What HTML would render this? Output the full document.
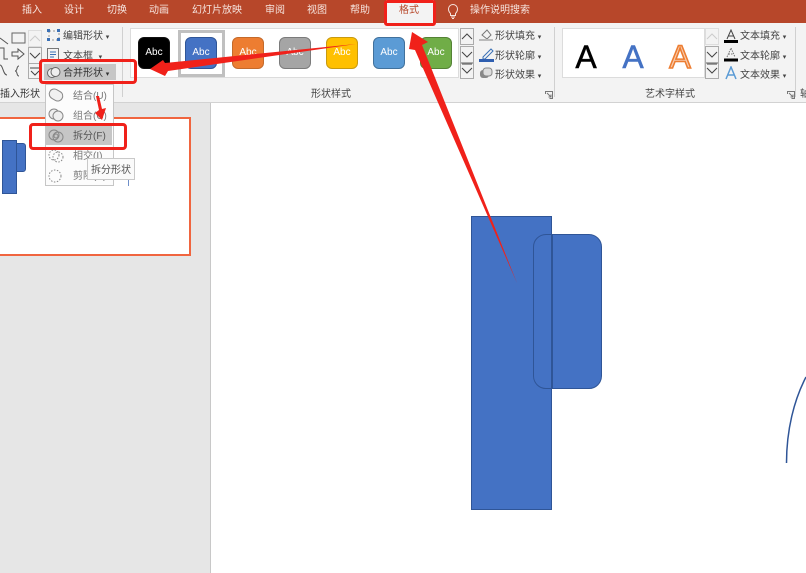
<!DOCTYPE html>
<html><head><meta charset="utf-8">
<style>
html,body{margin:0;padding:0}
body{width:806px;height:573px;overflow:hidden;position:relative;background:#fff;font-family:"Liberation Sans","Noto Sans CJK SC",sans-serif;color:#444}
.a{position:absolute}
.t{position:absolute;font-size:10px;line-height:12px;white-space:nowrap;transform:translateY(2px)}
.tab{position:absolute;top:4px;font-size:10px;line-height:13px;color:#f6e4de;white-space:nowrap}
.sw{position:absolute;top:37px;width:32px;height:32px;border-radius:6px;box-sizing:border-box;border:1px solid;color:#fff;font-size:10px;line-height:29px;text-align:center}
.sb{position:absolute;width:14px;height:17px;background:#f3f3f3;border:1px solid #ababab;box-sizing:border-box}
</style></head><body>
<div class="a" style="left:0;top:0;width:806px;height:23px;background:#b7472a"></div>
<div class="a" style="left:0;top:23px;width:806px;height:79px;background:#f3f3f3;border-bottom:1px solid #d2d2d2"></div>
<div class="a" style="left:0;top:103px;width:210px;height:470px;background:#e6e6e6;border-right:1px solid #c8c8c8"></div>

<div class="tab" style="left:22px">插入</div>
<div class="tab" style="left:64px">设计</div>
<div class="tab" style="left:107px">切换</div>
<div class="tab" style="left:149px">动画</div>
<div class="tab" style="left:192px">幻灯片放映</div>
<div class="tab" style="left:265px">审阅</div>
<div class="tab" style="left:307px">视图</div>
<div class="tab" style="left:350px">帮助</div>
<div class="a" style="left:386px;top:0;width:48px;height:24px;background:#f3f3f3"></div>
<div class="tab" style="left:399px;color:#b7472a">格式</div>
<svg class="a" style="left:446px;top:2px" width="14" height="18" viewBox="0 0 14 18"><path d="M4.500 11.500C3 10 2.500 8.500 2.500 7A4.500 4.500 0 0 1 11.500 7C11.500 8.500 11 10 9.500 11.500V13.500H4.500ZM5 15H9M6 16.500H8" fill="none" stroke="#f6e4de"/></svg>
<div class="tab" style="left:470px">操作说明搜索</div>

<!-- shape gallery left -->
<svg class="a" style="left:0;top:28px" width="42" height="52" viewBox="0 0 42 52" fill="none" stroke="#555">
<path d="M0 10L8 16"/><rect x="12" y="5" width="13" height="10" stroke="#666"/>
<path d="M0 20H4V31H8"/><path d="M12 24H18V21L24 26L18 31V28H12Z"/>
<path d="M0 37C3 37 3 47 7 47"/><path d="M19 38C16 38 18 43 15 43C18 43 16 48 19 48"/>
</svg>
<div class="sb" style="left:28px;top:30px;border-color:#ddd"></div>
<div class="sb" style="left:28px;top:47px"></div>
<div class="sb" style="left:28px;top:63px;height:16px"></div>
<svg class="a" style="left:28px;top:30px" width="14" height="50" fill="none"><path d="M2 11L7 6L12 11" stroke="#ccc"/><path d="M2 23L7 28L12 23" stroke="#444"/><path d="M2 38H12M3 41L7 45L11 41" stroke="#444"/></svg>

<svg class="a" style="left:47px;top:29px" width="14" height="13" fill="none"><rect x="2" y="2" width="10" height="9" stroke="#999" stroke-dasharray="2 2"/><rect x="0" y="0" width="3" height="3" fill="#3a70b5"/><rect x="10" y="0" width="3" height="3" fill="#3a70b5"/><rect x="0" y="9" width="3" height="3" fill="#3a70b5"/><rect x="10" y="9" width="3" height="3" fill="#3a70b5"/></svg>
<div class="t" style="left:63px;top:29px">编辑形状 <span style="font-size:7px">▾</span></div>
<svg class="a" style="left:47px;top:48px" width="13" height="13" fill="none"><rect x=".5" y=".5" width="11" height="11" stroke="#777"/><path d="M3 4H9M3 6.500H9M3 9H7" stroke="#3a70b5"/></svg>
<div class="t" style="left:63px;top:49px">文本框 &nbsp;<span style="font-size:7px">▾</span></div>
<div class="a" style="left:44px;top:64px;width:72px;height:16px;background:#c6c6c6"></div>
<svg class="a" style="left:47px;top:66px" width="14" height="13" fill="none" stroke="#666"><circle cx="5" cy="7" r="4.500" fill="#eee"/><circle cx="8.500" cy="6" r="4.500" fill="#eee"/></svg>
<div class="t" style="left:63px;top:66px;color:#333">合并形状 <span style="font-size:7px">▾</span></div>
<div class="t" style="left:0;top:87px;color:#333">插入形状</div>
<div class="a" style="left:122px;top:27px;width:1px;height:70px;background:#d0d0d0"></div>

<!-- shape styles gallery -->
<div class="a" style="left:130px;top:28px;width:329px;height:50px;background:#fff;border:1px solid #dcdcdc;box-sizing:border-box"></div>
<div class="a" style="left:178px;top:30px;width:47px;height:47px;background:#fff;border:3px solid #c0c0c0;box-sizing:border-box"></div>
<div class="sw" style="left:138px;background:#000;border-color:#111">Abc</div>
<div class="sw" style="left:185px;background:#4472c4;border-color:#2f5597">Abc</div>
<div class="sw" style="left:232px;background:#ed7d31;border-color:#c46a2b">Abc</div>
<div class="sw" style="left:279px;background:#a5a5a5;border-color:#7b7b7b">Abc</div>
<div class="sw" style="left:326px;background:#ffc000;border-color:#c89a10">Abc</div>
<div class="sw" style="left:373px;background:#5b9bd5;border-color:#41719c">Abc</div>
<div class="sw" style="left:420px;background:#70ad47;border-color:#548235">Abc</div>
<div class="sb" style="left:460px;top:28px"></div>
<div class="sb" style="left:460px;top:46px"></div>
<div class="sb" style="left:460px;top:63px;height:16px"></div>
<svg class="a" style="left:460px;top:28px" width="14" height="50" fill="none" stroke="#444"><path d="M2 11L7 6L12 11M2 24L7 29L12 24M2 36H12M2 40L7 45L12 40"/></svg>
<svg class="a" style="left:479px;top:28px" width="16" height="14" fill="none"><path d="M3 7L8 2L12 7L8 11Z" stroke="#777"/><path d="M0 12H14" stroke="#bbb" stroke-width="2"/></svg>
<div class="t" style="left:495px;top:29px">形状填充 <span style="font-size:7px">▾</span></div>
<svg class="a" style="left:479px;top:47px" width="16" height="15"><path d="M4 10L12 2L14 4L6 12H4Z" fill="none" stroke="#3a70b5"/><path d="M0 13.500H15" stroke="#2f5fb0" stroke-width="3"/></svg>
<div class="t" style="left:495px;top:49px">形状轮廓 <span style="font-size:7px">▾</span></div>
<svg class="a" style="left:479px;top:67px" width="14" height="13"><rect x="1" y="3" width="9" height="8" rx="3" fill="#888"/><rect x="4" y="1" width="9" height="8" rx="3" fill="#ddd" stroke="#888"/></svg>
<div class="t" style="left:495px;top:68px">形状效果 <span style="font-size:7px">▾</span></div>
<div class="t" style="left:311px;top:87px;color:#444">形状样式</div>
<svg class="a" style="left:545px;top:91px" width="8" height="8" fill="none" stroke="#777"><path d="M.5 3V.5H7.500V7.500H4.500M2 2L6 6M6 3.500V6H3.500"/></svg>
<div class="a" style="left:554px;top:27px;width:1px;height:70px;background:#d0d0d0"></div>

<!-- wordart -->
<div class="a" style="left:562px;top:28px;width:143px;height:50px;background:#fff;border:1px solid #dcdcdc;box-sizing:border-box"></div>
<div class="a" style="left:572px;top:39px;width:28px;text-align:center;font-size:32px;line-height:36px;color:#000;-webkit-text-stroke:.5px #000">A</div>
<div class="a" style="left:619px;top:39px;width:28px;text-align:center;font-size:32px;line-height:36px;color:#4472c4;-webkit-text-stroke:.5px #4472c4">A</div>
<svg class="a" style="left:664px;top:39px" width="32" height="36"><text x="16" y="29" text-anchor="middle" font-family="Liberation Sans" font-size="32" fill="#f8cbad" stroke="#ed7d31" stroke-width="1.600">A</text></svg>
<div class="sb" style="left:705px;top:28px;border-color:#ddd"></div>
<div class="sb" style="left:705px;top:46px"></div>
<div class="sb" style="left:705px;top:63px;height:16px"></div>
<svg class="a" style="left:705px;top:28px" width="14" height="50" fill="none"><path d="M2 11L7 6L12 11" stroke="#ccc"/><path d="M2 24L7 29L12 24M2 36H12M2 40L7 45L12 40" stroke="#444"/></svg>
<svg class="a" style="left:724px;top:29px" width="14" height="14" fill="none"><path d="M3 10L7 1L11 10M4.500 7H9.500" stroke="#444"/><path d="M0 12.500H14" stroke="#000" stroke-width="3"/></svg>
<div class="t" style="left:740px;top:29px">文本填充 <span style="font-size:7px">▾</span></div>
<svg class="a" style="left:724px;top:47px" width="14" height="15" fill="none"><path d="M3 10L7 1L11 10M4.500 7H9.500" stroke="#777" stroke-dasharray="1.500 1"/><path d="M0 13H14" stroke="#000" stroke-width="3"/></svg>
<div class="t" style="left:740px;top:49px">文本轮廓 <span style="font-size:7px">▾</span></div>
<svg class="a" style="left:724px;top:66px" width="14" height="14" fill="none"><path d="M2 13L7 1L12 13M4 9H10" stroke="#5b9bd5" stroke-width="1.500"/></svg>
<div class="t" style="left:740px;top:68px">文本效果 <span style="font-size:7px">▾</span></div>
<div class="t" style="left:645px;top:87px">艺术字样式</div>
<svg class="a" style="left:787px;top:91px" width="8" height="8" fill="none" stroke="#777"><path d="M.5 3V.5H7.500V7.500H4.500M2 2L6 6M6 3.500V6H3.500"/></svg>
<div class="a" style="left:795px;top:27px;width:1px;height:70px;background:#d0d0d0"></div>
<div class="t" style="left:800px;top:87px">轴</div>

<!-- thumbnail slide -->
<div class="a" style="left:-3px;top:117px;width:194px;height:139px;background:#fff;border:2px solid #f0653f;box-sizing:border-box"></div>
<div class="a" style="left:16px;top:143px;width:10px;height:29px;background:#4472c4;border:1px solid #2f5597;border-radius:0 3px 3px 0;box-sizing:border-box"></div>
<div class="a" style="left:2px;top:140px;width:15px;height:54px;background:#4472c4;border:1px solid #2f5597;box-sizing:border-box"></div>

<!-- dropdown -->
<div class="a" style="left:45px;top:84px;width:69px;height:102px;background:#fcfcfc;border:1px solid #c6c6c6;box-sizing:border-box"></div>
<div class="a" style="left:46px;top:125px;width:66px;height:20px;background:#c6c6c6"></div>
<svg class="a" style="left:47px;top:87px" width="20" height="100" fill="none" stroke="#888">
<rect x="2" y="3" width="14" height="10" rx="5" transform="rotate(30 9 8)" fill="#f0f0f0"/>
<circle cx="7" cy="27" r="5" fill="#eee"/><circle cx="11" cy="29" r="5" fill="#eee"/>
<circle cx="7" cy="48" r="5"/><circle cx="11" cy="50" r="5"/><circle cx="9" cy="49" r="2"/>
<circle cx="7" cy="68" r="5" stroke-dasharray="1.500 1.500"/><circle cx="11" cy="70" r="5" stroke-dasharray="1.500 1.500"/>
<circle cx="8" cy="89" r="6" stroke-dasharray="1.500 1.500"/>
</svg>
<div class="t" style="left:73px;top:89px;color:#777">结合(U)</div>
<div class="t" style="left:73px;top:109px;color:#777">组合(C)</div>
<div class="t" style="left:73px;top:129px;color:#555">拆分(F)</div>
<div class="t" style="left:73px;top:149px;color:#777">相交(I)</div>
<div class="t" style="left:73px;top:169px;color:#777">剪除(S)</div>
<div class="a" style="left:87px;top:158px;width:48px;height:22px;background:#fafafa;border:1px solid #c9c9c9;box-sizing:border-box"></div>
<div class="t" style="left:91px;top:163px;color:#555">拆分形状</div>
<div class="a" style="left:128px;top:180px;width:1px;height:6px;background:#6f8fc9"></div>

<!-- main shapes -->
<div class="a" style="left:471px;top:216px;width:81px;height:294px;background:#4472c4;border:1px solid #2f5597;box-sizing:border-box"></div>
<div class="a" style="left:533px;top:234px;width:69px;height:155px;background:#4472c4;border:1.500px solid #2f5597;border-radius:13px;box-sizing:border-box"></div>
<div class="a" style="left:551px;top:235px;width:1.500px;height:153px;background:#2f5597"></div>
<svg class="a" style="left:780px;top:370px" width="26" height="100" fill="none"><path d="M6.500 93C6.500 60 14 30 26 7" stroke="#2f5597" stroke-width="1.500"/></svg>

<!-- red annotations -->
<div class="a" style="left:384px;top:0;width:52px;height:26px;border:3px solid #f0211a;border-radius:3px;box-sizing:border-box"></div>
<div class="a" style="left:39px;top:59px;width:98px;height:25px;border:3px solid #f0211a;border-radius:4px;box-sizing:border-box"></div>
<div class="a" style="left:29px;top:123px;width:98px;height:27px;border:3px solid #f0211a;border-radius:4px;box-sizing:border-box"></div>
<svg class="a" style="left:0;top:0" width="806" height="573">
<polygon fill="#f0211a" points="150,69 163,60 165,63 356,44 168,71 165,76"/>
<polygon fill="#f0211a" points="412,32 428,42 422,45 517,283 415,50 409,49"/>
<polygon fill="#f0211a" points="96,96 99,96 102,109 106,108 102,120 95,113 99,110"/>
</svg>
</body></html>
